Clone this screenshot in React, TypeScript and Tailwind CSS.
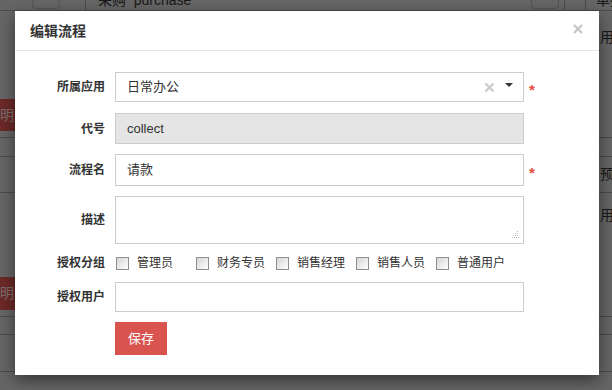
import React from "react";

const groups = ["管理员", "财务专员", "销售经理", "销售人员", "普通用户"];

function Backdrop() {
  return (
    <div className="flex flex-col text-[14px] text-[#333]">
      <div className="-mt-[10px] h-[21px] flex items-center border-b border-[#999]">
        <div className="ml-[32px] w-[28px] h-[17px] border border-[#aaa] rounded-sm" />
        <div className="ml-[25px] h-full border-l border-[#999]" />
        <span className="ml-[12px] leading-none">采购&nbsp;&nbsp;purchase</span>
        <div className="ml-auto w-[28px] h-[17px] border border-[#aaa] rounded-sm" />
        <div className="ml-[5px] h-full border-l border-[#999]" />
        <div className="ml-[20px] h-full border-l border-[#999]" />
        <span className="ml-[10px] mr-[-40px] leading-none">单据信息</span>
      </div>
      <div className="h-[127px] flex border-b border-[#999]">
        <div className="mt-[88px] -ml-[6px] w-[21px] h-[32px] bg-[#d9534f] text-white/80 flex items-center justify-end pr-[1px]">
          明
        </div>
        <span className="ml-auto mt-[16px] -mr-[2px]">用</span>
      </div>
      <div className="h-[19px] border-b border-[#999]" />
      <div className="h-[36px] flex items-center border-b border-[#999]">
        <span className="ml-auto -mr-[2px]">预</span>
      </div>
      <div className="h-[124px] flex border-b border-[#999]">
        <div className="mt-[84px] -ml-[6px] w-[21px] h-[33px] bg-[#d9534f] text-white/80 flex items-center justify-end pr-[1px]">
          明
        </div>
        <span className="ml-auto mt-[12px] -mr-[2px]">用</span>
      </div>
      <div className="h-[18px] border-b border-[#999]" />
      <div className="h-[37px] border-b border-[#999]" />
      <div className="h-[30px]" />
    </div>
  );
}

function Row({ label, children, className }: { label: string; children: React.ReactNode; className: string }) {
  return (
    <div className={"flex items-center " + className}>
      <label className="w-[100px] pr-[10px] text-right text-[12px] font-bold text-[#333]">{label}</label>
      {children}
    </div>
  );
}

function Required() {
  return <span className="ml-[5px] text-[15px] font-bold leading-none text-[#e74c3c] pt-[4px]">*</span>;
}

function Checkbox() {
  return (
    <span className="w-[13px] h-[13px] border border-[#8f8f8f] bg-gradient-to-br from-[#d6d6d6] to-white shrink-0" />
  );
}

export default function App() {
  return (
    <div className="relative w-[612px] h-[390px] overflow-hidden bg-[#cccccc] font-['Liberation_Sans','Noto_Sans_CJK_SC',sans-serif]">
      <Backdrop />
      <div className="absolute inset-0 bg-black/50" />

      <div className="absolute left-[15px] top-[11px] w-[584px] h-[364px] bg-white shadow-[0_5px_15px_rgba(0,0,0,0.5)]">
        <div className="h-[40px] flex items-center justify-between pl-[15px] pr-[16px] border-b border-[#e5e5e5]">
          <h4 className="text-[14px] font-bold text-[#333] pt-[1px]">编辑流程</h4>
          <svg width="10" height="10" viewBox="0 0 10 10" className="mb-[4px]">
            <path d="M1 1L9 9M9 1L1 9" stroke="#c8c8c8" strokeWidth="2.4" />
          </svg>
        </div>

        <div className="pt-[21px] text-[13px] text-[#333]">
          <Row label="所属应用" className="h-[30px]">
            <div className="w-[409px] h-full border border-[#ccc] flex items-center pl-[11px] pr-[10px]">
              <span>日常办公</span>
              <svg width="11" height="11" viewBox="0 0 11 11" className="ml-auto">
                <path d="M1.5 1.5L9.5 9.5M9.5 1.5L1.5 9.5" stroke="#cccccc" strokeWidth="2.4" />
              </svg>
              <svg width="8" height="4" viewBox="0 0 8 4" className="ml-[10px] mb-[4px]">
                <path d="M0 0H8L4 4Z" fill="#333" />
              </svg>
            </div>
            <Required />
          </Row>

          <Row label="代号" className="mt-[11px] h-[31px]">
            <div className="w-[409px] h-full border border-[#ccc] bg-[#e5e5e5] flex items-center pl-[11px]">
              collect
            </div>
          </Row>

          <Row label="流程名" className="mt-[10px] h-[32px]">
            <div className="w-[409px] h-full border border-[#ccc] flex items-center pl-[11px]">请款</div>
            <Required />
          </Row>

          <Row label="描述" className="mt-[10px] h-[48px]">
            <div className="relative w-[409px] h-full">
              <textarea className="w-full h-full border border-[#ccc] resize-none outline-none" />
              <svg width="7" height="7" viewBox="0 0 7 7" className="absolute right-[5px] bottom-[6px]">
                <g fill="#b5b5b5">
                  <rect x="5" y="0" width="1" height="1" />
                  <rect x="3" y="2" width="1" height="1" />
                  <rect x="5" y="2" width="1" height="1" />
                  <rect x="1" y="4" width="1" height="1" />
                  <rect x="3" y="4" width="1" height="1" />
                  <rect x="5" y="4" width="1" height="1" />
                  <rect x="0" y="6" width="1" height="1" />
                  <rect x="2" y="6" width="1" height="1" />
                  <rect x="4" y="6" width="1" height="1" />
                  <rect x="6" y="6" width="1" height="1" />
                </g>
              </svg>
            </div>
          </Row>

          <Row label="授权分组" className="mt-[9px] h-[20px]">
            <div className="flex items-center pl-[1px]">
              {groups.map((g) => (
                <div key={g} className="w-[80px] flex items-center gap-[8px] text-[12px]">
                  <Checkbox />
                  <span>{g}</span>
                </div>
              ))}
            </div>
          </Row>

          <Row label="授权用户" className="mt-[9px] h-[30px]">
            <div className="w-[409px] h-full border border-[#ccc]" />
          </Row>

          <div className="mt-[10px] pl-[100px]">
            <button className="w-[52px] h-[33px] bg-[#d9534f] text-white text-[13px]">保存</button>
          </div>
        </div>
      </div>
    </div>
  );
}
